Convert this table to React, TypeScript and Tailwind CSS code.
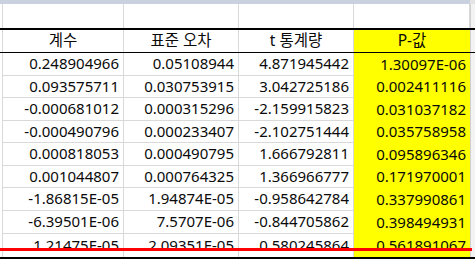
import React from "react";

const rows: string[][] = [
  ["0.248904966", "0.05108944", "4.871945442", "1.30097E-06"],
  ["0.093575711", "0.030753915", "3.042725186", "0.002411116"],
  ["-0.000681012", "0.000315296", "-2.159915823", "0.031037182"],
  ["-0.000490796", "0.000233407", "-2.102751444", "0.035758958"],
  ["0.000818053", "0.000490795", "1.666792811", "0.095896346"],
  ["0.001044807", "0.000764325", "1.366966777", "0.171970001"],
  ["-1.86815E-05", "1.94874E-05", "-0.958642784", "0.337990861"],
  ["-6.39501E-06", "7.5707E-06", "-0.844705862", "0.398494931"],
  ["1.21475E-05", "2.09351E-05", "0.580245864", "0.561891067"],
];

// row heights in px, gridline included
const rowHeights = [
  "h-[23px]",
  "h-[22px]",
  "h-[23px]",
  "h-[22px]",
  "h-[23px]",
  "h-[22px]",
  "h-[23px]",
  "h-[23px]",
  "h-[23px]",
];

const colWidths = ["w-[121px]", "w-[115px]", "w-[115px]", "w-[116px]"];

const headers = ["계수", "표준 오차", "t 통계량", "P-값"];

const Edge = () => <div className="w-[3px] shrink-0 border-r border-[#d9d9d9]" />;

const Tail = () => <div className="flex-1 border-l border-[#cfcfcf] bg-[#f3f3f3]" />;

export default function App() {
  return (
    <div
      className="relative w-[475px] h-[263px] overflow-hidden bg-white text-[15px] text-[#0a0a0a]"
      style={{ fontFamily: '"Noto Sans", "Noto Sans CJK KR", sans-serif' }}
    >
      {/* selection band on top */}
      <div className="flex h-[4px]">
        <div className="w-[470px] bg-[#c9d0e0]" />
        <div className="flex-1 bg-[#e4e4e4]" />
      </div>

      {/* empty row above the table */}
      <div className="flex h-[24px]">
        <Edge />
        {colWidths.map((w) => (
          <div key={w + "top"} className={`${w} shrink-0 border-r border-[#d9d9d9]`} />
        ))}
        <Tail />
      </div>

      <div className="h-[2px] bg-black" />

      {/* header row */}
      <div className="flex h-[23px] border-b border-black">
        <Edge />
        {headers.map((h, i) => (
          <div
            key={h}
            className={`${colWidths[i]} shrink-0 flex items-center justify-center pb-[1px] leading-none text-[15.5px] ${
              i === 3 ? "bg-[#ffff00]" : "border-r border-[#d9d9d9]"
            }`}
          >
            {h}
          </div>
        ))}
        <Tail />
      </div>

      {/* data rows */}
      {rows.map((r, ri) => (
        <div key={ri} className={`flex ${rowHeights[ri]}`}>
          <Edge />
          {r.map((v, ci) => (
            <div
              key={ci}
              className={`${colWidths[ci]} shrink-0 flex items-center justify-end pr-[4px] pb-[1px] leading-none ${
                ci === 3
                  ? "bg-[#ffff00]"
                  : `border-r ${ri < rows.length - 1 ? "border-b" : ""} border-[#d9d9d9]`
              }`}
            >
              {v}
            </div>
          ))}
          <Tail />
        </div>
      ))}

      <div className="h-[2px] bg-black" />

      {/* red annotation stroke */}
      <div className="absolute left-0 top-[248px] w-[472px] h-[3px] bg-[#ff0000]" />
    </div>
  );
}
